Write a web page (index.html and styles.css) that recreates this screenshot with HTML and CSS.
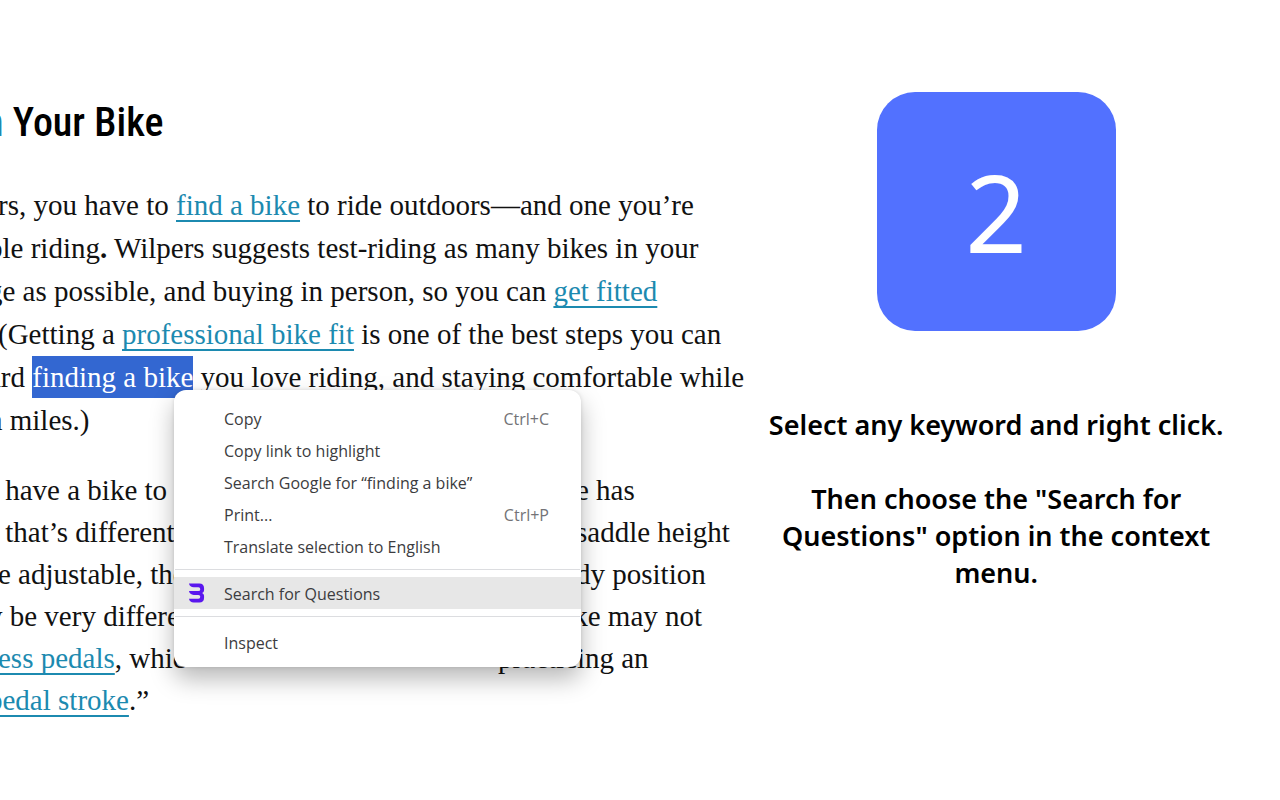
FILE: index.html
```html
<!DOCTYPE html>
<html lang="en">
<head>
  <meta charset="UTF-8" />
  <meta name="viewport" content="width=device-width, initial-scale=1.0" />
  <title>Search for Questions - Step 2</title>
  <link rel="stylesheet" href="styles.css">
</head>
<body>
  <main class="slide">
    <!-- Article with the context menu open -->
    <section class="article">
      <h1><span class="cut">n</span> Your Bike</h1>

      <p class="intro">
        <span class="line">rs, you have to <a href="#find">find a bike</a> to ride outdoors—and one you’re</span>
        <span class="line shifted">ble riding<b>.</b> Wilpers suggests test-riding as many bikes in your</span>
        <span class="line shifted">ge as possible, and buying in person, so you can <a href="#fitted">get fitted</a></span>
        <span class="line">(Getting a <a href="#fit">professional bike fit</a> is one of the best steps you can</span>
        <span class="line shifted">ard <mark>finding a bike</mark> you love riding, and staying comfortable while</span>
        <span class="line shifted">n miles.)</span>
      </p>

      <p class="quote">
        <span class="line"><span class="start">&nbsp;have a bike to p</span>e has</span>
        <span class="line"><span class="start">&nbsp;that’s different</span>saddle height</span>
        <span class="line"><span class="start">e adjustable, the</span>dy position</span>
        <span class="line shifted"><span class="start">y be very different</span>&nbsp;ke may not</span>
        <span class="line"><span class="start short"><a href="#pedals">ess pedals</a>, whic</span>practicing an</span>
        <span class="line shifted"><a href="#stroke">pedal stroke</a>.”</span>
      </p>

      <div class="menu">
        <button type="button">Copy <kbd>Ctrl+C</kbd></button>
        <button type="button">Copy link to highlight</button>
        <button type="button">Search Google for “finding a bike”</button>
        <button type="button">Print... <kbd>Ctrl+P</kbd></button>
        <button type="button">Translate selection to English</button>
        <hr>
        <button type="button" class="active">
          <svg class="menu-icon" viewBox="0 0 18 22" aria-hidden="true">
            <path d="M1 1h11q5 0 5 5v2q0 2-2 3 2 1 2 3v2q0 5-5 5H6q-4 0-5-4h10q2 0 2-2t-2-2H6q-4 0-5-4h10q2 0 2-2t-2-2H6Q2 5 1 1z" fill="#5a17ee" />
          </svg>
          Search for Questions
        </button>
        <hr>
        <button type="button">Inspect</button>
      </div>
    </section>

    <!-- Step description -->
    <section class="step">
      <div class="step-number">2</div>
      <p>Select any keyword and right click.</p>
      <p>Then choose the "Search for Questions" option in the context menu.</p>
    </section>
  </main>
</body>
</html>
```
FILE: styles.css
```css
* {
  box-sizing: border-box;
}

body {
  margin: 0;
  background: #fff;
  color: #000;
}

.slide {
  display: grid;
  grid-template-columns: 58% 42%;
  min-height: 100vh;
  overflow: hidden;
}

/* Article */
.article {
  position: relative;
  padding-top: 92px;
  font-family: "Liberation Serif", serif;
  font-size: 29px;
  color: #111;
}

.article h1 {
  margin: 0 0 30px -16px;
  font-family: "Roboto Condensed", "Liberation Sans Narrow", sans-serif;
  font-size: 40px;
  font-weight: 500;
  line-height: 62px;
  color: #000;
}

.cut {
  color: #1c8ab0;
}

.article p {
  margin: 0;
}

.intro {
  line-height: 43px;
}

.article .quote {
  margin-top: 27px;
  line-height: 42px;
}

.line {
  display: block;
  margin-left: -2px;
  white-space: nowrap;
}

.line.shifted {
  margin-left: -12px;
}

.start {
  display: inline-block;
  width: 578px;
}

.start.short {
  width: 500px;
}

.article a {
  color: #1c8ab0;
  text-decoration: underline 2px;
  text-underline-offset: 5px;
  text-decoration-skip-ink: none;
}

mark {
  padding: 5px 0;
  background: #3367d1;
  color: #fff;
}

/* Context menu */
.menu {
  position: absolute;
  top: 390px;
  left: 174px;
  width: 407px;
  padding: 12px 0 9px;
  background: #fff;
  border-radius: 12px;
  box-shadow: 0 12px 24px rgba(0, 0, 0, 0.28), 0 0 4px rgba(0, 0, 0, 0.12);
}

.menu button {
  position: relative;
  display: flex;
  justify-content: space-between;
  align-items: center;
  width: 100%;
  height: 32px;
  padding: 2px 32px 0 50px;
  border: none;
  background: none;
  font-family: "Open Sans", sans-serif;
  font-size: 16px;
  color: #3c3c40;
  text-align: left;
}

.menu .active {
  background: #e7e7e7;
}

.menu kbd {
  font-family: inherit;
  color: #737377;
}

.menu hr {
  margin: 7px 1px;
  border: none;
  border-top: 1px solid #dcdde0;
}

.menu .active + hr {
  margin-bottom: 9px;
}

.menu-icon {
  position: absolute;
  left: 14px;
  top: 5px;
  width: 17px;
  height: 22px;
}

/* Step description */
.step {
  display: flex;
  flex-direction: column;
  align-items: center;
  padding: 92px 52px 0 22px;
  font-family: "Noto Sans", sans-serif;
  font-size: 27px;
  font-weight: 600;
  line-height: 37px;
  text-align: center;
}

.step-number {
  display: flex;
  justify-content: center;
  align-items: center;
  width: 239px;
  height: 239px;
  margin-bottom: 75px;
  background: #5271ff;
  border-radius: 38px;
  color: #fff;
  font-size: 108px;
  font-weight: 400;
}

.step p {
  margin: 0 0 37px;
}
```
